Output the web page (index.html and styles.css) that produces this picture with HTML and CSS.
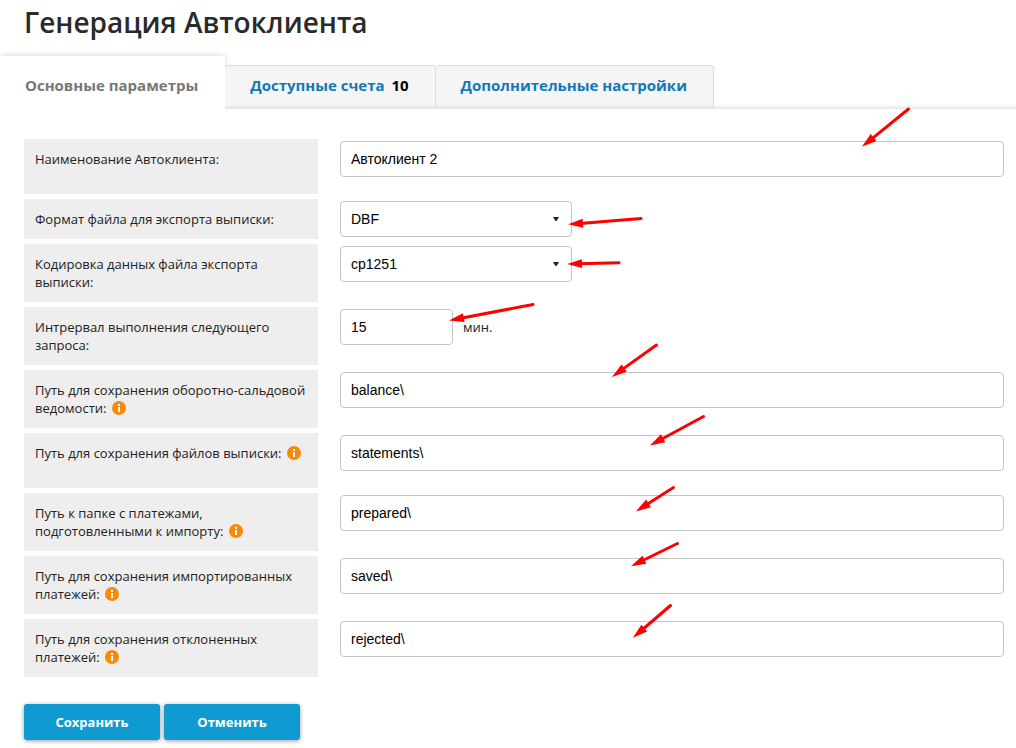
FILE: index.html
```html
<!DOCTYPE html>
<html lang="ru">
<head>
<meta charset="utf-8">
<title>Генерация Автоклиента</title>
<link rel="stylesheet" href="styles.css">
</head>
<body>
<svg class="defs" width="0" height="0" aria-hidden="true">
  <symbol id="info" viewBox="0 0 14 14">
    <circle cx="7" cy="7" r="7" fill="#f78b08"/>
    <path d="M6 3h2v2H6zM6 6h2v5H6z" fill="#fff"/>
  </symbol>
</svg>
<main class="page">
  <h1 class="title">Генерация Автоклиента</h1>
  <nav class="tabs">
    <a class="tab tab-active" href="#main">Основные параметры</a>
    <a class="tab" href="#accounts">Доступные счета <span class="count">10</span></a>
    <a class="tab" href="#extra">Дополнительные настройки</a>
  </nav>
  <form class="panel" id="main">
    <div class="row">
      <label class="label" for="name">Наименование Автоклиента:</label>
      <div class="field"><input class="input input-wide" id="name" type="text" value="Автоклиент 2"></div>
    </div>
    <div class="row">
      <label class="label" for="format">Формат файла для экспорта выписки:</label>
      <div class="field"><select class="input select" id="format"><option>DBF</option></select></div>
    </div>
    <div class="row">
      <label class="label" for="encoding">Кодировка данных файла экспорта выписки:</label>
      <div class="field"><select class="input select" id="encoding"><option>cp1251</option></select></div>
    </div>
    <div class="row">
      <label class="label" for="interval">Интрервал выполнения следующего запроса:</label>
      <div class="field"><input class="input input-short" id="interval" type="text" value="15"><span class="unit">мин.</span></div>
    </div>
    <div class="row">
      <label class="label" for="balance">Путь для сохранения оборотно-сальдовой ведомости: <svg class="info"><use href="#info"/></svg></label>
      <div class="field"><input class="input input-wide" id="balance" type="text" value="balance\"></div>
    </div>
    <div class="row">
      <label class="label" for="statements">Путь для сохранения файлов выписки: <svg class="info"><use href="#info"/></svg></label>
      <div class="field"><input class="input input-wide" id="statements" type="text" value="statements\"></div>
    </div>
    <div class="row">
      <label class="label" for="prepared">Путь к папке с платежами, подготовленными к импорту: <svg class="info"><use href="#info"/></svg></label>
      <div class="field"><input class="input input-wide" id="prepared" type="text" value="prepared\"></div>
    </div>
    <div class="row">
      <label class="label" for="saved">Путь для сохранения импортированных платежей: <svg class="info"><use href="#info"/></svg></label>
      <div class="field"><input class="input input-wide" id="saved" type="text" value="saved\"></div>
    </div>
    <div class="row">
      <label class="label" for="rejected">Путь для сохранения отклоненных платежей: <svg class="info"><use href="#info"/></svg></label>
      <div class="field"><input class="input input-wide" id="rejected" type="text" value="rejected\"></div>
    </div>
    <div class="actions">
      <button class="button" type="submit">Сохранить</button>
      <button class="button" type="button">Отменить</button>
    </div>
  </form>
</main>
<svg class="arrows" width="1016" height="748" viewBox="0 0 1016 748" aria-hidden="true">
  <defs>
    <marker id="head" markerUnits="userSpaceOnUse" markerWidth="17" markerHeight="10" refX="4" refY="5" orient="auto">
      <path d="M1 0.500L16 5L1 9.500z" fill="#f00"/>
    </marker>
  </defs>
  <g stroke="#f00" stroke-width="3" stroke-linecap="round">
    <path d="M908.500 109L871.200 139.300" marker-end="url(#head)"/>
    <path d="M641 218.500L580 223.400" marker-end="url(#head)"/>
    <path d="M619 262.700L579 263.700" marker-end="url(#head)"/>
    <path d="M533 304.500L460.800 318.200" marker-end="url(#head)"/>
    <path d="M656.500 345L621.700 369.900" marker-end="url(#head)"/>
    <path d="M703.500 416.500L660.500 439.700" marker-end="url(#head)"/>
    <path d="M673.500 487.500L646 505" marker-end="url(#head)"/>
    <path d="M677.500 543.500L641.700 561" marker-end="url(#head)"/>
    <path d="M670.500 605.500L642 630" marker-end="url(#head)"/>
  </g>
</svg>
</body>
</html>
```
FILE: styles.css
```css
* {
  box-sizing: border-box;
}

body {
  margin: 0;
  background: #fff;
  color: #222;
  font: 13px/18px "Open Sans", "Noto Sans", sans-serif;
}

.defs {
  display: block;
}

.title {
  margin: 0;
  padding: 3px 24px 0;
  color: #2a2a2a;
  font-size: 28px;
  font-weight: 600;
  line-height: 38px;
}

.tabs {
  display: flex;
  align-items: flex-end;
  padding-top: 15px;
  overflow: hidden;
  background: linear-gradient(to top, #e8e8e8, #fff) bottom / 100% 5px no-repeat;
}

.tab {
  height: 44px;
  padding: 0 26px 0 25px;
  border: 1px solid #ddd;
  border-left: 0;
  border-bottom: 0;
  border-radius: 3px 3px 0 0;
  background: linear-gradient(to top, #e4e4e4, #f5f5f5 5px);
  color: #1279b5;
  font-size: 15px;
  font-weight: 700;
  line-height: 38px;
  text-decoration: none;
}

.tab-active {
  height: 53px;
  padding: 0 27px 0 25px;
  border: 0;
  border-radius: 0 3px 0 0;
  background: #fff;
  box-shadow: 0 0 6px rgba(0, 0, 0, 0.2);
  color: #777;
  line-height: 59px;
}

.count {
  margin-left: 3px;
  color: #000;
}

.panel {
  display: flex;
  flex-direction: column;
  gap: 5px;
  padding: 30px 12px 8px 24px;
}

.row {
  display: grid;
  grid-template-columns: 294px 1fr;
  column-gap: 22px;
}

.label {
  padding: 11px;
  background: #eee;
}

.info {
  width: 14px;
  height: 14px;
  margin-left: 2px;
  vertical-align: -2px;
}

.field {
  display: flex;
  align-items: flex-start;
  padding-top: 2px;
}

.input {
  height: 36px;
  padding: 0 10px;
  border: 1px solid #c4c4c4;
  border-radius: 4px;
  background: #fff;
  color: #000;
  font: 14px "Liberation Sans", Arial, sans-serif;
}

.input-wide {
  width: 100%;
  margin-bottom: 17px;
}

.input-short {
  width: 113px;
}

.select {
  width: 232px;
  appearance: none;
  background: #fff url("data:image/svg+xml,%3Csvg xmlns='http://www.w3.org/2000/svg' width='6' height='4'%3E%3Cpath d='M0 0h6L3.500 4h-1z' fill='%23222'/%3E%3C/svg%3E") right 12px center no-repeat;
}

.unit {
  padding: 9px 10px;
}

.actions {
  display: flex;
  gap: 4px;
  padding-top: 22px;
}

.button {
  width: 136px;
  height: 36px;
  border: 0;
  border-radius: 3px;
  background: #0f9bd2;
  box-shadow: 0 1px 4px rgba(0, 0, 0, 0.4);
  color: #fff;
  font: 700 13px "Open Sans", "Noto Sans", sans-serif;
}

.arrows {
  position: absolute;
  top: 0;
  left: 0;
  pointer-events: none;
}
```
